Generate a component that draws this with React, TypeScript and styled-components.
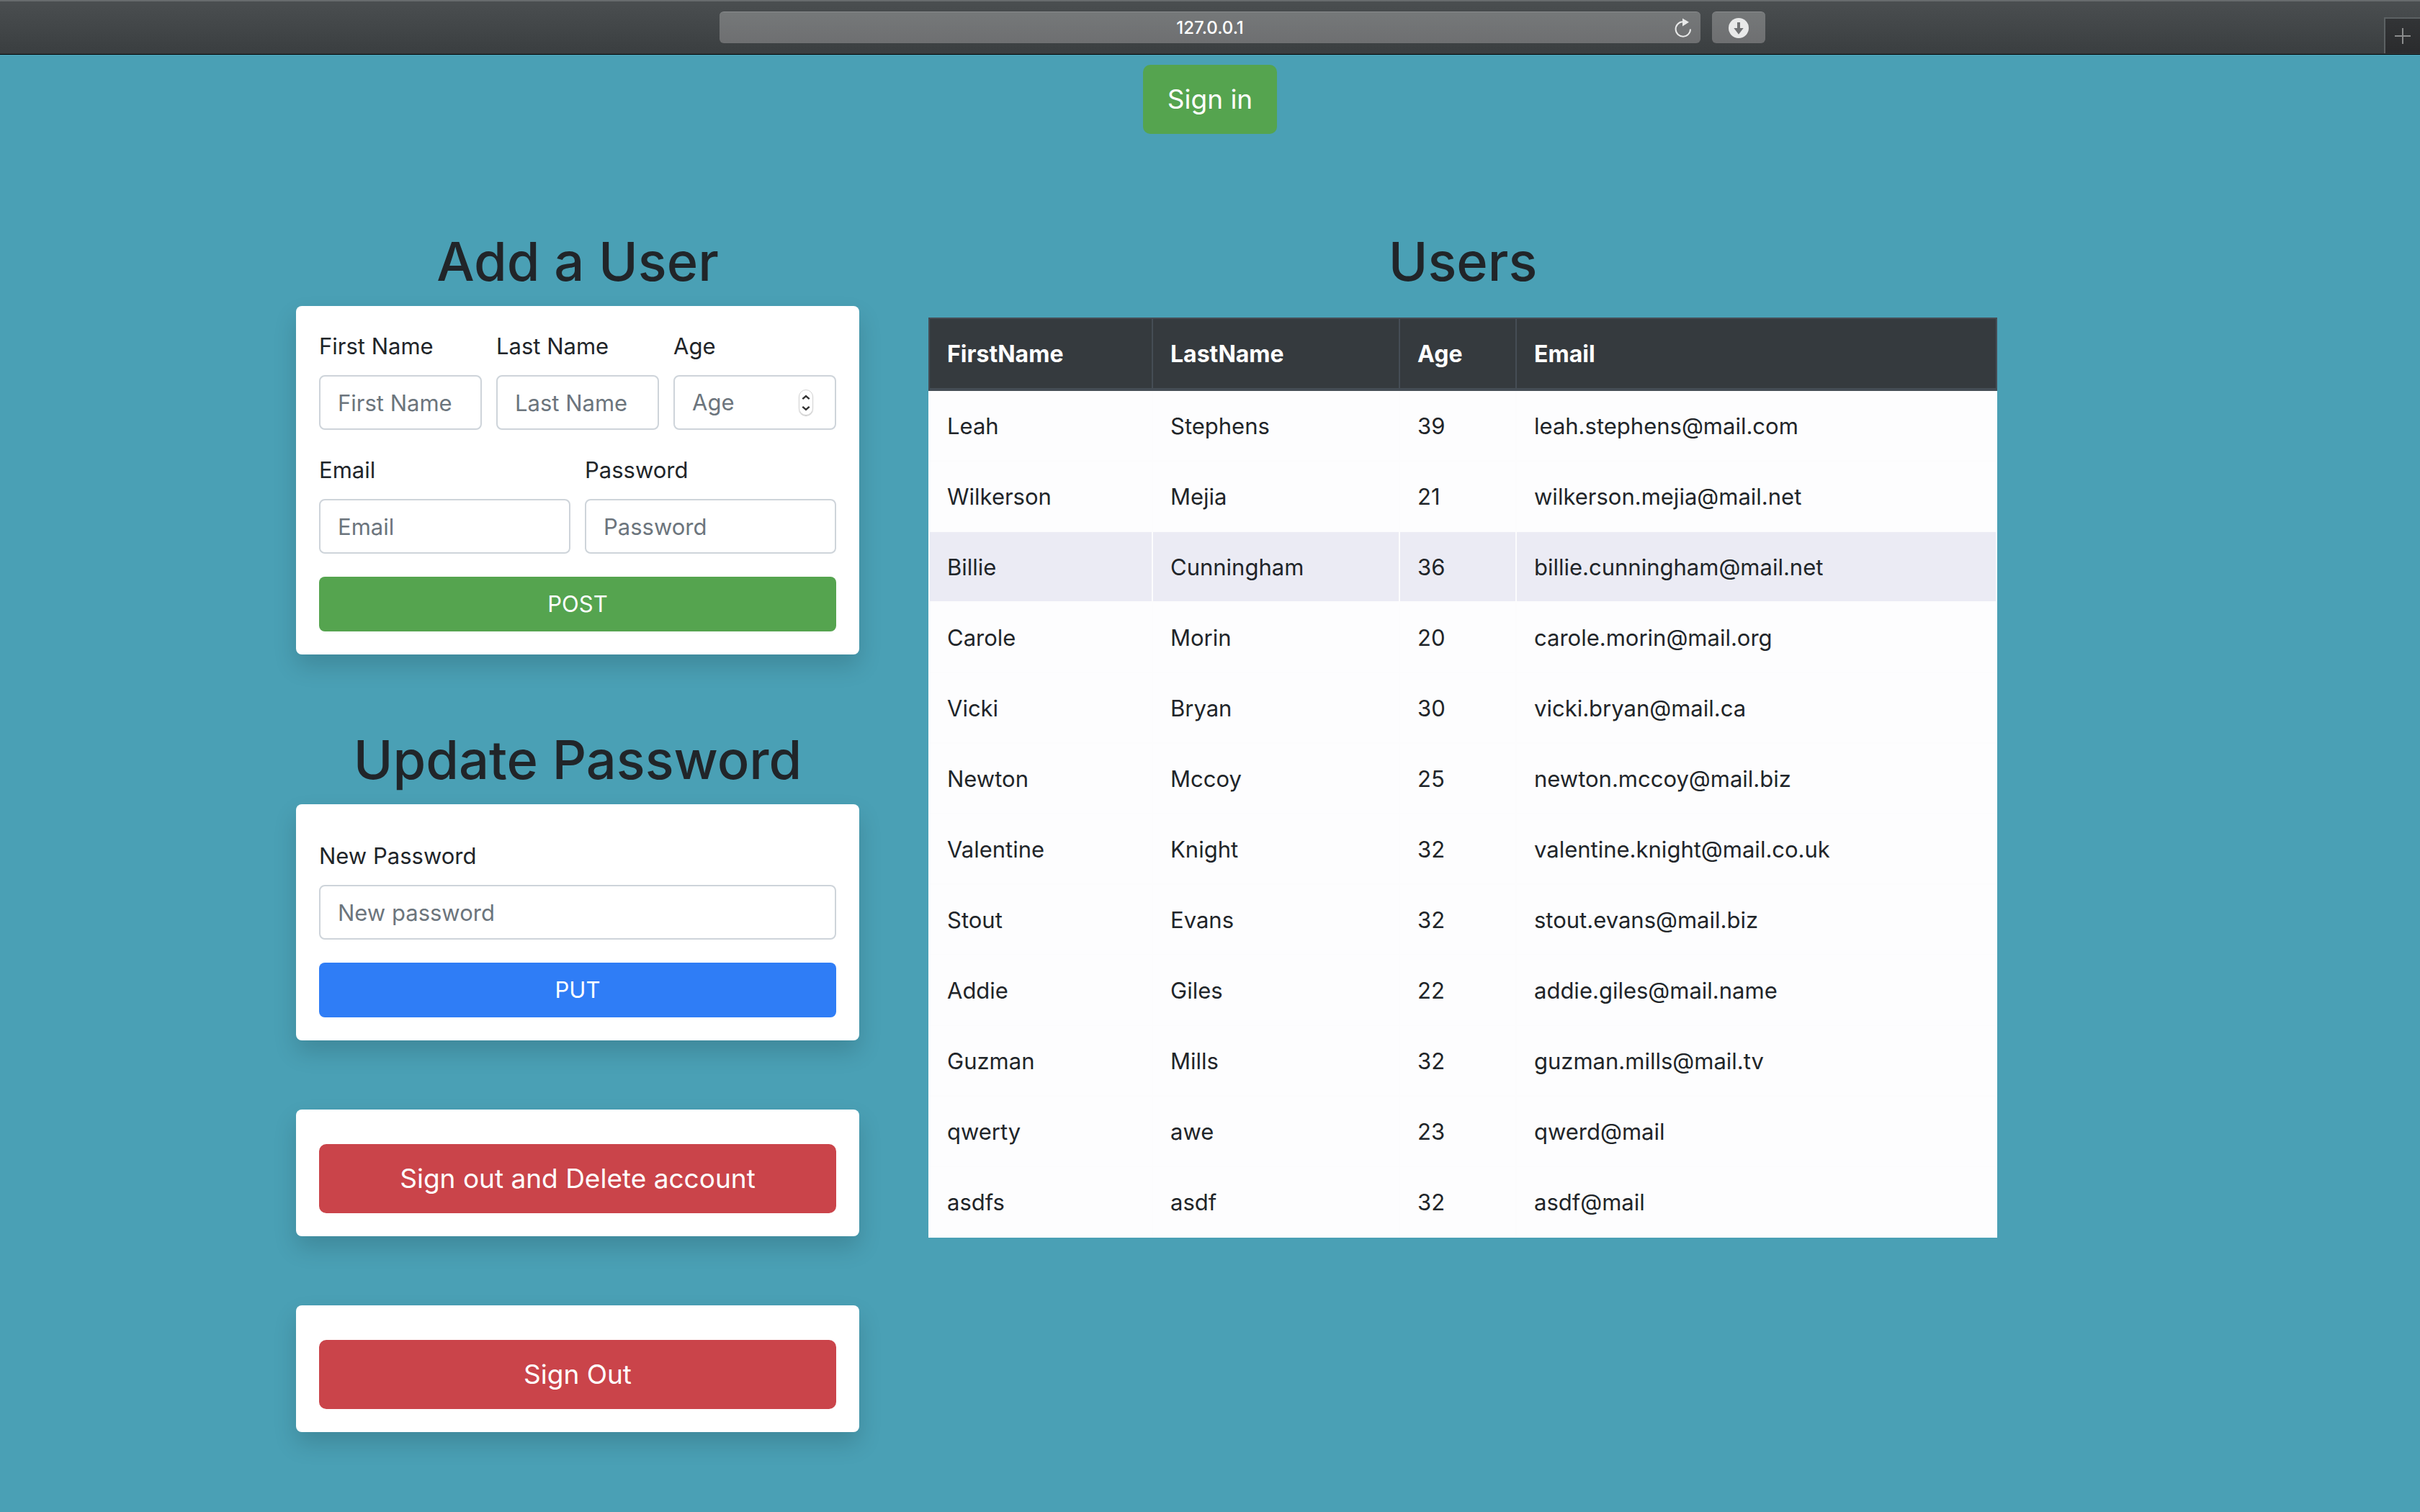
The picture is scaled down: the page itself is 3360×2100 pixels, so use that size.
import React, { useState } from "react";
import styled, { createGlobalStyle } from "styled-components";

const GlobalStyle = createGlobalStyle`
  *, *::before, *::after { box-sizing: border-box; }
  body {
    margin: 0;
    min-height: 100vh;
    background: #4aa0b5;
    color: #212529;
    font-family: Inter, "Liberation Sans", sans-serif;
    font-size: 31px;
    line-height: 48px;
  }
  button, input { font: inherit; }
`;

const tones = {
  success: "#55a44f",
  primary: "#2f7df6",
  danger: "#ca444a",
};

/* ---------- browser bar ---------- */

const Toolbar = styled.header`
  display: grid;
  grid-template-columns: 999fr 1362fr 999fr;
  align-items: start;
  height: 76px;
  border-top: 2px solid #676b6d;
  border-bottom: 1px solid #000;
  background: linear-gradient(#4a4e50, #3a3e40);
`;

const AddressBar = styled.div`
  grid-column: 2;
  display: flex;
  height: 44px;
  margin-top: 14px;
  border-top: 1px solid #8b8d8f;
  border-radius: 6px;
  background: linear-gradient(#757879, #6e6f71);
`;

const Address = styled.input`
  flex: 1;
  min-width: 0;
  padding: 0 0 0 48px;
  border: 0;
  background: none;
  color: #fff;
  font-size: 24px;
  font-weight: 500;
  line-height: 28px;
  text-align: center;
  outline: none;
`;

const BarButton = styled.button`
  display: grid;
  place-items: center;
  width: 48px;
  padding: 0;
  border: 0;
  background: none;
  color: #e8e9e9;
`;

const DownloadButton = styled(BarButton)`
  width: 74px;
  height: 44px;
  border-top: 1px solid #8b8d8f;
  border-radius: 6px;
  background: linear-gradient(#757879, #6e6f71);
`;

const ToolbarEnd = styled.div`
  display: flex;
  justify-content: space-between;
  padding: 14px 0 0 16px;
`;

const NewTab = styled(BarButton)`
  width: 50px;
  height: 50px;
  margin-top: 8px;
  border-top: 2px solid #5c6163;
  border-left: 2px solid #5c6163;
  background: linear-gradient(#323436, #2a2b2d);
  color: #8b8c8d;
`;

/* ---------- page ---------- */

const Page = styled.main`
  display: flex;
  flex-direction: column;
  align-items: center;
  padding: 14px 0 96px;
`;

const Columns = styled.div`
  display: grid;
  grid-template-columns: minmax(0, 782fr) minmax(0, 1484fr);
  column-gap: 96px;
  align-items: start;
  width: 100%;
  margin-top: 127px;
  padding: 0 587px 0 411px;
`;

const Stack = styled.div`
  display: flex;
  flex-direction: column;
  gap: 96px;
`;

const Title = styled.h1`
  margin: 0 0 12px;
  font-size: 74px;
  font-weight: 500;
  line-height: 100px;
  text-align: center;
`;

const Card = styled.form<{ $roomy?: boolean }>`
  display: flex;
  flex-direction: column;
  gap: 32px;
  padding: ${(p) => (p.$roomy ? 48 : 32)}px 32px 32px;
  border-radius: 8px;
  background: #fff;
  box-shadow: 0 16px 32px rgba(0, 0, 0, 0.15);
`;

const Row = styled.div`
  display: flex;
  gap: 20px;
`;

const Group = styled.div`
  display: flex;
  flex: 1;
  flex-direction: column;
  gap: 16px;
  min-width: 0;
`;

const TextInput = styled.input`
  width: 100%;
  height: 76px;
  padding: 12px 24px;
  border: 2px solid #ced4da;
  border-radius: 8px;
  background: #fff;
  color: #495057;
  &::placeholder { color: #6c757d; opacity: 1; }
`;

const NumberBox = styled.div`
  display: flex;
  align-items: center;
  height: 76px;
  padding: 0 30px 0 24px;
  border: 2px solid #ced4da;
  border-radius: 8px;
`;

const NumberInput = styled.input`
  flex: 1;
  min-width: 0;
  padding: 0;
  border: 0;
  outline: none;
  color: #495057;
  appearance: textfield;
  &::placeholder { color: #6c757d; opacity: 1; }
  &::-webkit-inner-spin-button { display: none; }
`;

const Stepper = styled.div`
  display: flex;
  flex-direction: column;
  width: 20px;
  height: 36px;
  padding: 2px 0;
  border: 1px solid #d4d4d4;
  border-radius: 10px;
  box-shadow: 0 1px 1px rgba(0, 0, 0, 0.25);
`;

const Step = styled.button`
  display: grid;
  flex: 1;
  place-items: center;
  padding: 0;
  border: 0;
  background: none;
  color: #333;
`;

const Button = styled.button<{ $tone: keyof typeof tones; $large?: boolean }>`
  height: ${(p) => (p.$large ? 96 : 76)}px;
  padding: 0 ${(p) => (p.$large ? 34 : 26)}px;
  border: 0;
  border-radius: ${(p) => (p.$large ? 10 : 8)}px;
  background: ${(p) => tones[p.$tone]};
  color: #fff;
  font-size: ${(p) => (p.$large ? 37 : 31)}px;
`;

/* ---------- table ---------- */

const Table = styled.table`
  width: 100%;
  margin-top: 28px;
  border-collapse: collapse;
  table-layout: fixed;
  background: #fdfdfe;
`;

const Col = styled.col<{ $width?: number }>`
  width: ${(p) => (p.$width ? `${p.$width}px` : "auto")};
`;

const HeadCell = styled.th`
  padding: 25px 24px 23px;
  border: 2px solid #454d55;
  border-bottom-width: 4px;
  background: #353a3e;
  color: #fff;
  font-size: 32px;
  font-weight: 700;
  text-align: left;
`;

const BodyRow = styled.tr<{ $active: boolean }>`
  background: ${(p) => (p.$active ? "#ebebf4" : "#fdfdfe")};
`;

const Cell = styled.td`
  padding: 25px 24px 23px;
  border: 2px solid #fcfcfd;
`;

const users = [
  ["Leah", "Stephens", 39, "leah.stephens@mail.com"],
  ["Wilkerson", "Mejia", 21, "wilkerson.mejia@mail.net"],
  ["Billie", "Cunningham", 36, "billie.cunningham@mail.net"],
  ["Carole", "Morin", 20, "carole.morin@mail.org"],
  ["Vicki", "Bryan", 30, "vicki.bryan@mail.ca"],
  ["Newton", "Mccoy", 25, "newton.mccoy@mail.biz"],
  ["Valentine", "Knight", 32, "valentine.knight@mail.co.uk"],
  ["Stout", "Evans", 32, "stout.evans@mail.biz"],
  ["Addie", "Giles", 22, "addie.giles@mail.name"],
  ["Guzman", "Mills", 32, "guzman.mills@mail.tv"],
  ["qwerty", "awe", 23, "qwerd@mail"],
  ["asdfs", "asdf", 32, "asdf@mail"],
];

function ReloadIcon() {
  return (
    <svg width="24" height="28" viewBox="0 0 24 28" fill="none">
      <path d="M22 15.5A10.2 10.2 0 1 1 11 5.3" stroke="currentColor" strokeWidth="2" />
      <path d="M11 0.5V11.5L20 5.8Z" fill="currentColor" />
    </svg>
  );
}

function DownloadIcon() {
  return (
    <svg width="28" height="28" viewBox="0 0 28 28">
      <circle cx="14" cy="14" r="14" fill="currentColor" />
      <path d="M12 6h4v8h4.7L14 22.7 7.3 14H12z" fill="#707274" />
    </svg>
  );
}

function PlusIcon() {
  return (
    <svg width="22" height="22" viewBox="0 0 22 22" stroke="currentColor" strokeWidth="2">
      <path d="M11 0V22M0 11H22" />
    </svg>
  );
}

function Chevron({ down }: { down?: boolean }) {
  return (
    <svg width="12" height="8" viewBox="0 0 12 8" fill="none" stroke="currentColor" strokeWidth="2.4">
      <path d={down ? "M1.3 1.8L6 6L10.7 1.8" : "M1.3 6.2L6 2L10.7 6.2"} />
    </svg>
  );
}

function Field({ id, label, placeholder, type = "text" }: { id: string; label: string; placeholder: string; type?: string }) {
  return (
    <Group>
      <label htmlFor={id}>{label}</label>
      <TextInput id={id} type={type} placeholder={placeholder} />
    </Group>
  );
}

function AgeField() {
  const [age, setAge] = useState("");
  const step = (by: number) => setAge(String(Number(age) + by));
  return (
    <Group>
      <label htmlFor="age">Age</label>
      <NumberBox>
        <NumberInput id="age" type="number" placeholder="Age" value={age} onChange={(e) => setAge(e.target.value)} />
        <Stepper>
          <Step type="button" aria-label="Increase age" onClick={() => step(1)}><Chevron /></Step>
          <Step type="button" aria-label="Decrease age" onClick={() => step(-1)}><Chevron down /></Step>
        </Stepper>
      </NumberBox>
    </Group>
  );
}

export default function App() {
  return (
    <>
      <GlobalStyle />
      <Toolbar>
        <AddressBar>
          <Address aria-label="Address" defaultValue="127.0.0.1" />
          <BarButton aria-label="Reload"><ReloadIcon /></BarButton>
        </AddressBar>
        <ToolbarEnd>
          <DownloadButton aria-label="Downloads"><DownloadIcon /></DownloadButton>
          <NewTab aria-label="New tab"><PlusIcon /></NewTab>
        </ToolbarEnd>
      </Toolbar>
      <Page>
        <Button $tone="success" $large>Sign in</Button>
        <Columns>
          <Stack>
            <section>
              <Title>Add a User</Title>
              <Card>
                <Row>
                  <Field id="first-name" label="First Name" placeholder="First Name" />
                  <Field id="last-name" label="Last Name" placeholder="Last Name" />
                  <AgeField />
                </Row>
                <Row>
                  <Field id="email" label="Email" placeholder="Email" type="email" />
                  <Field id="password" label="Password" placeholder="Password" type="password" />
                </Row>
                <Button type="button" $tone="success">POST</Button>
              </Card>
            </section>
            <section>
              <Title>Update Password</Title>
              <Card $roomy>
                <Field id="new-password" label="New Password" placeholder="New password" type="password" />
                <Button type="button" $tone="primary">PUT</Button>
              </Card>
            </section>
            <Card $roomy>
              <Button type="button" $tone="danger" $large>Sign out and Delete account</Button>
            </Card>
            <Card $roomy>
              <Button type="button" $tone="danger" $large>Sign Out</Button>
            </Card>
          </Stack>
          <section>
            <Title>Users</Title>
            <Table>
              <colgroup>
                <Col $width={310} />
                <Col $width={343} />
                <Col $width={162} />
                <Col />
              </colgroup>
              <thead>
                <tr>
                  {["FirstName", "LastName", "Age", "Email"].map((name) => (
                    <HeadCell key={name} scope="col">{name}</HeadCell>
                  ))}
                </tr>
              </thead>
              <tbody>
                {users.map((user, i) => (
                  <BodyRow key={user[3]} $active={i === 2}>
                    {user.map((value, c) => (
                      <Cell key={c}>{value}</Cell>
                    ))}
                  </BodyRow>
                ))}
              </tbody>
            </Table>
          </section>
        </Columns>
      </Page>
    </>
  );
}
